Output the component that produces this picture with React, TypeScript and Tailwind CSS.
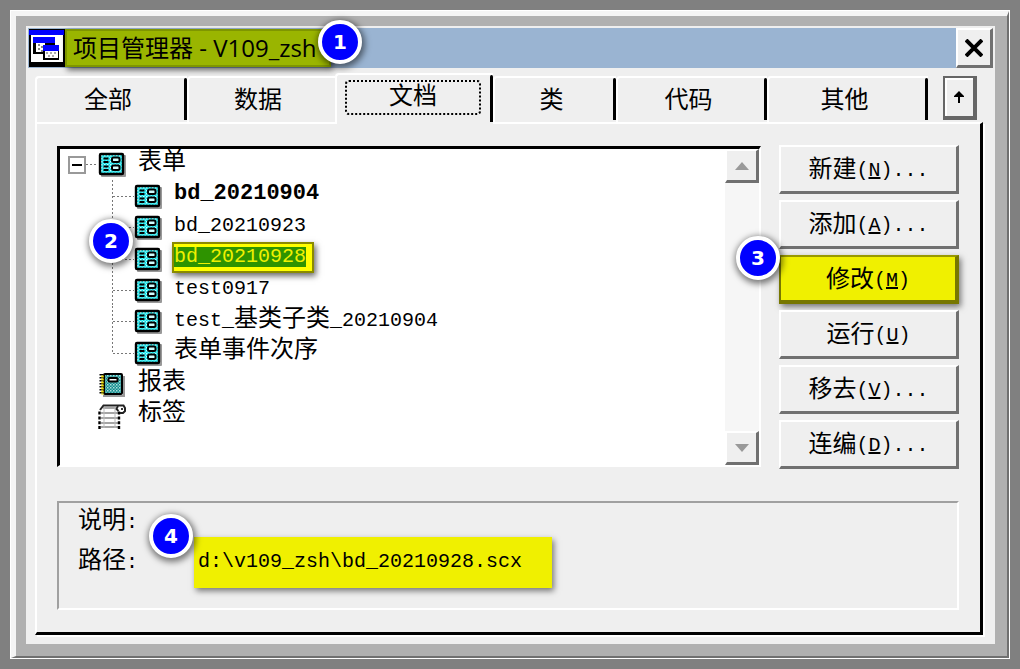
import { useState } from "react";
import clsx from "clsx";

const tabs = ["全部", "数据", "文档", "类", "代码", "其他"];

const actions = [
  { key: "N", label: "新建", more: true },
  { key: "A", label: "添加", more: true },
  { key: "M", label: "修改", more: false },
  { key: "U", label: "运行", more: false },
  { key: "V", label: "移去", more: true },
  { key: "D", label: "连编", more: true },
];

const forms = ["bd_20210904", "bd_20210923", "bd_20210928", "test0917", "test_基类子类_20210904", "表单事件次序"];

const raised = "border-t-2 border-l-2 border-r-[3px] border-b-[3px] border-t-white border-l-white border-r-[#707070] border-b-[#707070] bg-[#efefef]";

// Latin runs are set smaller than the Chinese ones so both keep the half/full width grid
function Mixed({ text }: { text: string }) {
  return (
    <>
      {text.split(/([\u4e00-\u9fff]+)/).map((part, i) =>
        i % 2 ? <span key={i} className="text-2xl leading-none">{part}</span> : part
      )}
    </>
  );
}

function Badge({ n, className }: { n: number; className: string }) {
  return (
    <span
      className={clsx(
        "absolute z-10 flex size-11 items-center justify-center rounded-full border-4 border-white bg-[#0000ff] font-['DejaVu_Sans'] text-xl leading-none font-bold text-white shadow-[1px_2px_6px_2px_rgba(0,0,0,0.5)]",
        className
      )}
    >
      {n}
    </span>
  );
}

function ProjectIcon() {
  return (
    <svg viewBox="0 0 36 38" className="h-[38px] w-9 shrink-0">
      <rect width="36" height="38" fill="#000" />
      <rect y="1" width="35" height="5" fill="#0000ff" />
      <rect x="2" y="6" width="32" height="27" fill="#fff" />
      <rect x="4" y="8" width="22" height="17" fill="#000" />
      <rect x="4" y="8" width="22" height="6" fill="#0000ff" />
      <rect x="7" y="14" width="9" height="9" fill="#fff" />
      <path d="M9 15h2v2H9zM12 17h2v2h-2zM9 19h2v2H9zM12 21h2v2h-2z" fill="#888" />
      <rect x="14" y="16" width="16" height="15" fill="#000" />
      <rect x="14" y="16" width="16" height="6" fill="#0000ff" />
      <rect x="16" y="22" width="13" height="7" fill="#fff" />
      <path d="M17 23h2v2h-2zM21 23h2v2h-2zM25 23h2v2h-2zM19 26h2v2h-2zM23 26h2v2h-2z" fill="#aaa" />
    </svg>
  );
}

function FormIcon() {
  return (
    <svg viewBox="0 0 28 25" className="h-[25px] w-7 shrink-0">
      <defs>
        <pattern id="cyan-dots" width="3" height="3" patternUnits="userSpaceOnUse">
          <rect width="3" height="3" fill="#00dfe6" />
          <rect width="1.5" height="1.5" fill="#c8ffff" />
          <rect x="1.5" y="1.5" width="1.5" height="1.5" fill="#70f0f4" />
        </pattern>
      </defs>
      <rect x="3" y="3" width="25" height="22" rx="1" fill="#999" />
      <rect x="2" y="2" width="23" height="20" rx="1" fill="url(#cyan-dots)" stroke="#000" strokeWidth="2.4" />
      <path d="M5.500 6.500h5M5.500 10h5M5.500 14.500h5M5.500 18h5" stroke="#000" strokeWidth="1.800" />
      <rect x="14" y="5.500" width="7.500" height="4.500" rx="1.500" fill="#d0ffff" stroke="#000" strokeWidth="2" />
      <rect x="14" y="13.500" width="7.500" height="4.500" rx="1.500" fill="#d0ffff" stroke="#000" strokeWidth="2" />
    </svg>
  );
}

function ReportIcon() {
  return (
    <svg viewBox="0 0 28 25" className="h-[25px] w-7 shrink-0">
      <defs>
        <pattern id="teal-dots" width="3" height="3" patternUnits="userSpaceOnUse">
          <rect width="3" height="3" fill="#108c8c" />
          <rect width="1.5" height="1.5" fill="#b0dcdc" />
          <rect x="1.5" y="1.5" width="1.5" height="1.5" fill="#70c0c0" />
        </pattern>
      </defs>
      <path d="M5 24h21V4" stroke="#999" strokeWidth="2" fill="none" />
      <rect x="6" y="2" width="18" height="20" rx="1" fill="url(#teal-dots)" stroke="#000" strokeWidth="2" />
      <path d="M3.500 2v21" stroke="#000" strokeWidth="4" strokeDasharray="1.500 1.500" />
      <path d="M4.500 3.500v19" stroke="#f0e000" strokeWidth="2.500" strokeDasharray="2 1" />
      <rect x="10.500" y="6" width="9" height="3.500" rx="1" fill="#fff" stroke="#000" strokeWidth="2" />
    </svg>
  );
}

function LabelIcon() {
  return (
    <svg viewBox="0 0 28 26" className="h-[26px] w-7 shrink-0" fill="none">
      <path d="M5 5h14M3 10h17M3 15h17M3 20h17M3 24h17" stroke="#888" strokeWidth="1.500" />
      <path d="M6 4v21M17 4v21" stroke="#bbb" strokeWidth="1" />
      <path d="M1.500 26V7M21 26V7" stroke="#000" strokeWidth="2.400" strokeDasharray="3 1.800" />
      <path d="M2 7l3.500-4.500h20L27 5v3l-2 2h-3" stroke="#222" strokeWidth="2" />
      <path d="M20 3l-1.500 3 2 2M24 5v2" stroke="#222" strokeWidth="1.800" />
    </svg>
  );
}

function ScrollButton({ down }: { down?: boolean }) {
  return (
    <button aria-label={down ? "向下滚动" : "向上滚动"} className={clsx("flex size-[34px] items-center justify-center", raised)}>
      <svg viewBox="0 0 14 8" className={clsx("h-2 w-3.5", down && "rotate-180")}>
        <path d="M0 8L7 0l7 8z" fill="#999" />
      </svg>
    </button>
  );
}

export default function App() {
  const [activeTab, setActiveTab] = useState("文档");
  const [selected, setSelected] = useState("bd_20210928");

  return (
    <div className="flex min-h-screen bg-[#808080] p-[10px] font-['Liberation_Mono','Noto_Sans_CJK_SC',monospace] text-xl leading-none text-black">
      <div className="flex flex-1 border border-white bg-[#b0b0b0]">
        <div className="flex flex-1 border-t-[5px] border-r-2 border-b-2 border-l-[5px] border-t-[#f4f4f4] border-r-[#707070] border-b-[#707070] border-l-[#f4f4f4] pt-[10px] pr-3 pb-3 pl-[10px]">
          <main className="flex flex-1 flex-col bg-[#efefef] px-0.5 pt-0.5 pb-[9px]">
            <header className="relative flex h-10 items-center bg-[#9ab4d2] pl-px">
              <ProjectIcon />
              <h1 className="flex h-[38px] items-center border-2 border-[#7f9600] bg-[#9ab500] pr-3 pl-1.5 font-['Open_Sans','Noto_Sans_CJK_SC',sans-serif] text-2xl leading-none shadow-[2px_3px_6px_rgba(0,0,0,0.6)]">
                项目管理器 - V109_zsh
              </h1>
              <Badge n={1} className="-top-2 left-[290px]" />
              <button aria-label="关闭" className={clsx("ml-auto flex h-10 w-[37px] items-center justify-center", raised)}>
                <svg viewBox="0 0 18 18" className="size-[18px]" stroke="#000" strokeWidth="4">
                  <path d="M1 1l16 16M17 1L1 17" />
                </svg>
              </button>
            </header>

            <div className="flex flex-1 flex-col pt-[5px] pr-[10px] pl-[7px]">
              <div role="tablist" className="grid h-[49px] grid-cols-[152fr_148fr_158fr_123fr_151fr_161fr_55fr] items-end">
                {tabs.map((tab) => {
                  const active = tab === activeTab;
                  return (
                    <button
                      key={tab}
                      role="tab"
                      aria-selected={active}
                      onClick={() => setActiveTab(tab)}
                      className={clsx(
                        "relative rounded-tl-sm border-t-2 border-l-2 border-white text-2xl leading-none",
                        active ? "z-10 -mb-0.5 h-[51px] self-end bg-[#efefef] px-2 pt-1 pb-2" : "h-[46px] pt-1 pr-2"
                      )}
                    >
                      <span
                        className={clsx(
                          "flex items-center justify-center",
                          active ? "h-[35px] w-[136px] rounded-sm border-2 border-dotted border-black" : "h-full"
                        )}
                      >
                        {tab}
                      </span>
                      {tab !== "数据" && <span className="absolute top-0 right-0 bottom-0.5 w-[3px] rounded-t-sm bg-black" />}
                    </button>
                  );
                })}
                <button
                  aria-label="折叠"
                  className="mb-0.5 ml-[15px] flex h-11 w-[34px] items-center justify-center border-2 border-r-4 border-b-4 border-[#666] bg-[#efefef] shadow-[inset_2px_2px_0_#fff]"
                >
                  <svg viewBox="0 0 12 12" className="size-3" fill="#000">
                    <path d="M6 0l5 5v1H7v6H5V6H1V5z" />
                  </svg>
                </button>
              </div>

              <section className="flex flex-1 flex-col justify-between border-t-2 border-r-[3px] border-b-[3px] border-l-2 border-t-white border-r-black border-b-black border-l-white pt-[21px] pr-[21px] pb-[22px] pl-5 shadow-[2px_2px_0_#fff]">
                <div className="flex gap-[18px]">
                  <div className="relative mt-px mb-[2px] flex flex-1 border-t-[3px] border-r-2 border-b-2 border-l-[3px] border-t-black border-r-white border-b-white border-l-black bg-white">
                    <ul role="tree" className="grid h-[283px] flex-1 auto-rows-fr">
                      <li role="treeitem" className="flex items-center pl-2">
                        <button aria-label="收起" className="flex size-[18px] items-center justify-center border-2 border-[#999] bg-white">
                          <span className="h-0.5 w-2.5 bg-black" />
                        </button>
                        <span className="h-px w-3 bg-[repeating-linear-gradient(to_right,#777_0_2px,transparent_2px_4px)]" />
                        <FormIcon />
                        <span className="pb-1 pl-3 text-2xl leading-none">表单</span>
                      </li>
                      {forms.map((name, i) => (
                        <li key={name} role="treeitem" aria-selected={name === selected} className="flex items-center pl-[52px]">
                          <span
                            className={clsx(
                              "w-px bg-[repeating-linear-gradient(to_bottom,#777_0_2px,transparent_2px_4px)]",
                              i === forms.length - 1 ? "h-1/2 self-start" : "h-full"
                            )}
                          />
                          <span className="h-px w-[21px] bg-[repeating-linear-gradient(to_right,#777_0_2px,transparent_2px_4px)]" />
                          <FormIcon />
                          <button
                            onClick={() => setSelected(name)}
                            className={clsx(
                              "mb-1 flex h-[31px] items-center",
                              i === 0 && "text-[22px] font-bold",
                              name === selected
                                ? "ml-2.5 border-2 border-[#8a8a00] bg-[#ffff00] pr-1.5 text-[#f0f000] shadow-[2px_3px_6px_rgba(0,0,0,0.6)]"
                                : "ml-3"
                            )}
                          >
                            <span className={clsx(name === selected && "bg-[#2e9300]")}>
                              <Mixed text={name} />
                            </span>
                          </button>
                        </li>
                      ))}
                      <li role="treeitem" className="flex items-center pl-[38px]">
                        <ReportIcon />
                        <span className="pb-1 pl-3 text-2xl leading-none">报表</span>
                      </li>
                      <li role="treeitem" className="flex items-center pl-[38px]">
                        <LabelIcon />
                        <span className="pb-1 pl-3 text-2xl leading-none">标签</span>
                      </li>
                    </ul>
                    <Badge n={2} className="top-[70px] left-[29px]" />
                    <div className="flex flex-col justify-between bg-[#f6f6f6]">
                      <ScrollButton />
                      <ScrollButton down />
                    </div>
                  </div>

                  <div className="flex w-[180px] flex-col gap-1.5">
                    {actions.map(({ key, label, more }) => (
                      <div key={key} className="relative">
                        <button
                          className={clsx(
                            "flex h-[49px] w-full items-center justify-center pt-1",
                            key === "M"
                              ? "border-2 border-r-4 border-b-4 border-[#777700] border-t-[#999900] bg-[#f0f000] shadow-[2px_3px_6px_rgba(0,0,0,0.5)]"
                              : raised
                          )}
                        >
                          <span className="text-2xl leading-none">{label}</span>
                          <span>
                            (<u>{key}</u>){more && "..."}
                          </span>
                        </button>
                        {key === "M" && <Badge n={3} className="-top-[19px] -left-[43px]" />}
                      </div>
                    ))}
                  </div>
                </div>

                <dl className="relative flex h-[109px] flex-col border-2 border-t-[#a0a0a0] border-r-white border-b-white border-l-[#a0a0a0] pl-[19px]">
                  <div className="flex h-[38px] items-center">
                    <dt><Mixed text="说明:" /></dt>
                    <dd />
                  </div>
                  <div className="flex h-[42px] items-center">
                    <dt className="w-[116px]"><Mixed text="路径:" /></dt>
                    <dd className="flex h-[51px] w-[358px] items-center bg-[#f0f000] pl-1 shadow-[2px_3px_6px_rgba(0,0,0,0.5)]">
                      d:\v109_zsh\bd_20210928.scx
                    </dd>
                  </div>
                  <Badge n={4} className="top-[11px] left-[90px]" />
                </dl>
              </section>
            </div>
          </main>
        </div>
      </div>
    </div>
  );
}
